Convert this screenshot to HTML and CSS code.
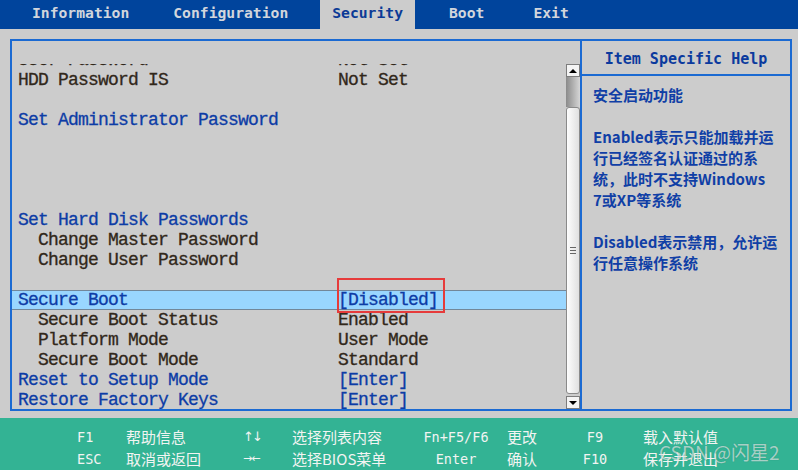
FILE: index.html
```html
<!DOCTYPE html>
<html>
<head>
<meta charset="utf-8">
<link rel="stylesheet" href="styles.css">
</head>
<body>
<div class="screen">
  <nav class="menubar">
    <span class="tab">Information</span>
    <span class="tab">Configuration</span>
    <span class="tab active">Security</span>
    <span class="tab">Boot</span>
    <span class="tab exit">Exit</span>
  </nav>
  <main class="main">
    <section class="panel">
      <div class="viewport">
        <div class="list">
          <div class="row"><span>User Password</span><span>Not Set</span></div>
          <div class="row"><span>HDD Password IS</span><span>Not Set</span></div>
          <div class="row"></div>
          <div class="row link"><span>Set Administrator Password</span><span></span></div>
          <div class="row"></div>
          <div class="row"></div>
          <div class="row"></div>
          <div class="row"></div>
          <div class="row link"><span>Set Hard Disk Passwords</span><span></span></div>
          <div class="row"><span class="ind">Change Master Password</span><span></span></div>
          <div class="row"><span class="ind">Change User Password</span><span></span></div>
          <div class="row"></div>
          <div class="row link sel"><span>Secure Boot</span><span class="val">[Disabled]<i class="redbox"></i></span></div>
          <div class="row"><span class="ind">Secure Boot Status</span><span>Enabled</span></div>
          <div class="row"><span class="ind">Platform Mode</span><span>User Mode</span></div>
          <div class="row"><span class="ind">Secure Boot Mode</span><span>Standard</span></div>
          <div class="row link"><span>Reset to Setup Mode</span><span>[Enter]</span></div>
          <div class="row link"><span>Restore Factory Keys</span><span>[Enter]</span></div>
        </div>
      </div>
      <div class="scrollbar">
        <div class="sb-btn up"></div>
        <div class="sb-track"></div>
        <div class="sb-thumb"><span class="grip"></span></div>
        <div class="sb-btn down"></div>
      </div>
    </section>
    <aside class="help">
      <div class="help-head">Item Specific Help</div>
      <div class="help-body">
        <p>安全启动功能</p>
        <p>Enabled表示只能加载并运<br>行已经签名认证通过的系<br>统，此时不支持Windows<br>7或XP等系统</p>
        <p>Disabled表示禁用，允许运<br>行任意操作系统</p>
      </div>
    </aside>
  </main>
  <footer class="keys">
    <span class="k">F1</span><span>帮助信息</span><span class="arr">↑↓</span><span>选择列表内容</span><span class="k c">Fn+F5/F6</span><span>更改</span><span class="k c">F9</span><span>载入默认值</span>
    <span class="k">ESC</span><span>取消或返回</span><span class="arr small">→←</span><span>选择BIOS菜单</span><span class="k c">Enter</span><span>确认</span><span class="k c">F10</span><span>保存并退出</span>
  </footer>
  <div class="watermark">CSDN @闪星2</div>
</div>
</body>
</html>
```

FILE: styles.css
```css
* { box-sizing: border-box; }
body {
  margin: 0;
  width: 798px;
  height: 470px;
  overflow: hidden;
  background: #cccccc;
}
.screen {
  position: relative;
  display: flex;
  flex-direction: column;
  height: 470px;
}
.menubar {
  height: 29px;
  background: #00449c;
  display: flex;
  padding-left: 20px;
  font-family: "DejaVu Sans Mono", monospace;
  font-weight: bold;
  font-size: 14.7px;
}
.tab {
  padding: 0 12px;
  height: 29px;
  line-height: 26px;
  color: #d2d6dc;
  margin-right: 20px;
}
.tab.active {
  background: #cccccc;
  color: #0b3a96;
  margin-right: 22px;
}
.tab.exit { margin-left: 5px; }

.main {
  height: 389px;
  display: flex;
  align-items: flex-start;
  padding: 10px 0 0 10px;
}
.panel {
  width: 570px;
  height: 372px;
  border: 2px solid #1b6ad2;
  border-right: none;
  display: flex;
}
.viewport {
  width: 554px;
  margin-top: 23px;
  height: 345px;
  overflow: hidden;
}
.list { margin-top: -14px; }
.row {
  display: grid;
  grid-template-columns: 320px auto;
  height: 20px;
  line-height: 20px;
  padding-left: 6px;
  font-family: "Liberation Mono", monospace;
  font-size: 18px;
  letter-spacing: -0.8px;
  color: #31271a;
  -webkit-text-stroke: 0.3px currentColor;
  white-space: pre;
}
.row .ind { padding-left: 20px; }
.row.link { color: #0d3ca6; }
.row.sel {
  background: #99d6ff;
  box-shadow: inset 0 1px #72879a, inset 0 -1px #72879a;
}
.val { position: relative; }
.redbox {
  position: absolute;
  left: -1px;
  top: -12px;
  width: 108px;
  height: 35px;
  border: 2.5px solid #e63b3b;
}

.scrollbar {
  width: 14px;
  margin-top: 23px;
  height: 345px;
  display: flex;
  flex-direction: column;
}
.sb-btn {
  height: 13px;
  background: #f4f4f4;
  border: 1px solid #7d7d7d;
  display: flex;
  align-items: center;
  justify-content: center;
}
.sb-btn::before {
  content: "";
  border-left: 4px solid transparent;
  border-right: 4px solid transparent;
}
.up::before { border-bottom: 4px solid #000; }
.down::before { border-top: 4px solid #000; }
.down { margin-top: 2px; }
.sb-track {
  height: 30px;
  background: linear-gradient(to right, #8a8a8a, #d6d6d6);
}
.sb-thumb {
  flex: 1;
  background: linear-gradient(to right, #fdfdfd, #e0e0e0);
  border: 1px solid #8a8a8a;
  border-radius: 3px;
  display: flex;
  justify-content: center;
  padding-top: 139px;
}
.grip {
  width: 6px;
  height: 7px;
  border-top: 1px solid #666;
  border-bottom: 1px solid #666;
  background: linear-gradient(#666, #666) center / 6px 1px no-repeat;
}

.help {
  width: 212px;
  height: 372px;
  border: 2px solid #1b6ad2;
}
.help-head {
  height: 35px;
  padding-top: 3px;
  border-bottom: 2px solid #1b6ad2;
  text-align: center;
  line-height: 30px;
  font-family: "DejaVu Sans Mono", monospace;
  font-weight: bold;
  font-size: 15px;
  color: #0b3a9e;
}
.help-body {
  padding: 8px 0 0 11px;
  font-family: "Noto Sans CJK SC", sans-serif;
  font-weight: bold;
  font-size: 15px;
  line-height: 21px;
  color: #103fa6;
  white-space: nowrap;
}
.help-body p { margin: 0 0 21px; }

.keys {
  height: 52px;
  background: #33b394;
  display: grid;
  grid-template-columns: 49px 117px 49px 113px 102px 40px 96px auto;
  grid-auto-rows: 22px;
  padding: 8px 0 0 77px;
  color: #f2f4f2;
  font-family: "Noto Sans CJK SC", sans-serif;
  font-size: 15px;
  line-height: 22px;
  white-space: nowrap;
}
.keys .k {
  font-family: "DejaVu Sans Mono", monospace;
  font-size: 13.5px;
}
.keys .c { text-align: center; }
.keys .arr {
  font-family: "DejaVu Sans", sans-serif;
  font-size: 13px;
  letter-spacing: -2px;
}
.keys .arr.small { font-size: 11px; letter-spacing: -1px; }
.watermark {
  position: absolute;
  left: 659px;
  top: 438px;
  line-height: 28px;
  font-family: "Noto Sans CJK SC", sans-serif;
  font-size: 19px;
  color: rgba(255, 255, 255, 0.6);
  text-shadow: 0 0 1px rgba(0, 0, 0, 0.25);
}
```
